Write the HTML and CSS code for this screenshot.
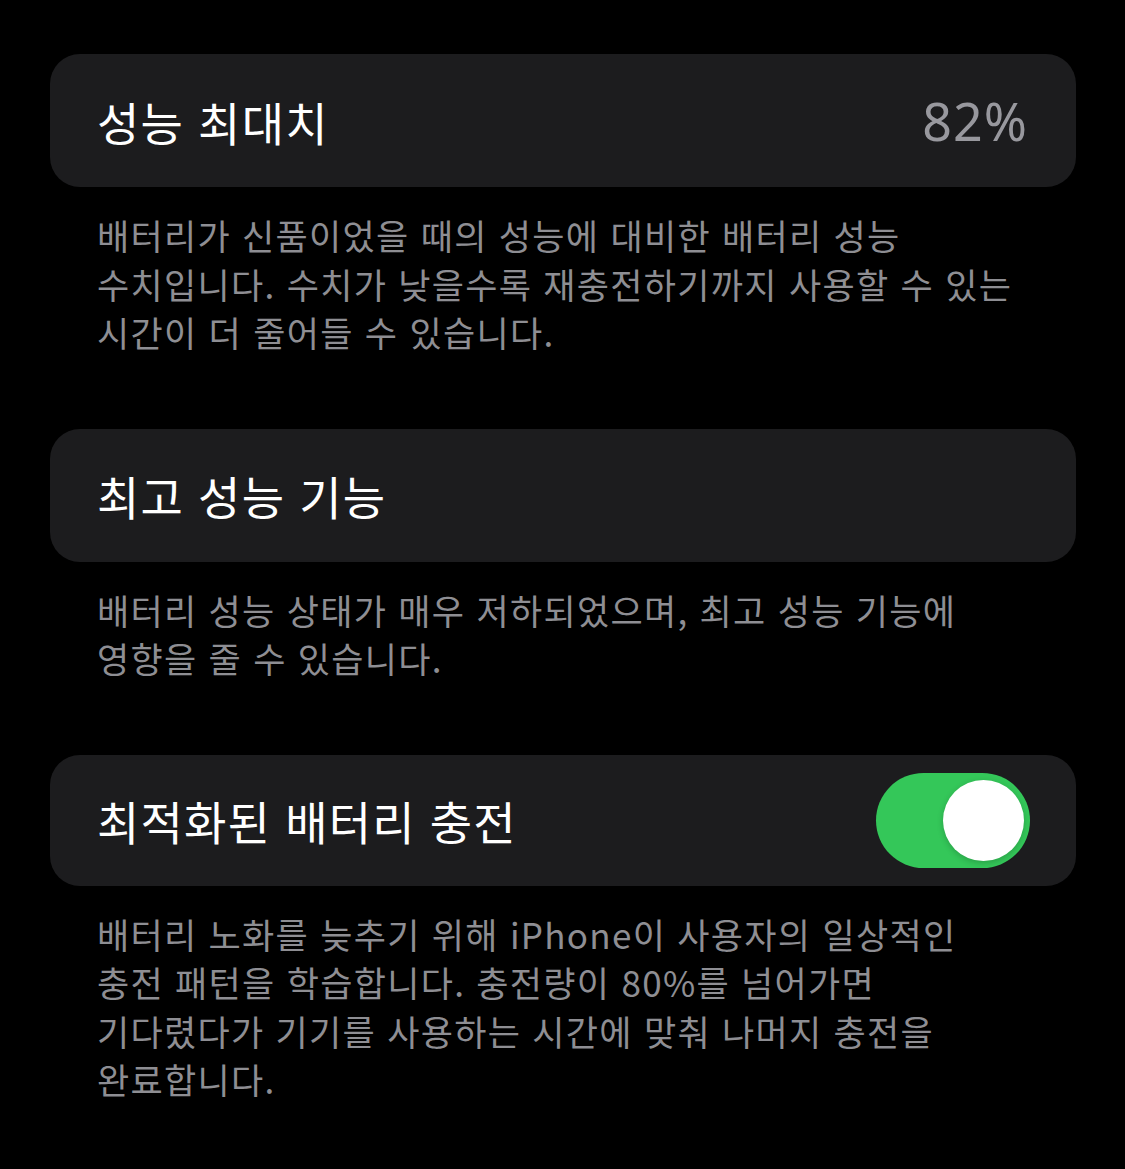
FILE: index.html
```html
<!DOCTYPE html>
<html lang="ko">
<head>
<meta charset="utf-8">
<link rel="stylesheet" href="styles.css">
</head>
<body>
<div class="page">
  <section class="group">
    <div class="card">
      <span class="title">성능 최대치</span>
      <span class="value">82%</span>
    </div>
    <p class="desc">배터리가 신품이었을 때의 성능에 대비한 배터리 성능<br>수치입니다. 수치가 낮을수록 재충전하기까지 사용할 수 있는<br>시간이 더 줄어들 수 있습니다.</p>
  </section>
  <section class="group">
    <div class="card">
      <span class="title">최고 성능 기능</span>
    </div>
    <p class="desc">배터리 성능 상태가 매우 저하되었으며, 최고 성능 기능에<br>영향을 줄 수 있습니다.</p>
  </section>
  <section class="group">
    <div class="card card-toggle">
      <span class="title">최적화된 배터리 충전</span>
      <span class="switch on"><span class="knob"></span></span>
    </div>
    <p class="desc">배터리 노화를 늦추기 위해 iPhone이 사용자의 일상적인<br>충전 패턴을 학습합니다. 충전량이 80%를 넘어가면<br>기다렸다가 기기를 사용하는 시간에 맞춰 나머지 충전을<br>완료합니다.</p>
  </section>
</div>
</body>
</html>
```

FILE: styles.css
```css
html, body {
  margin: 0;
  padding: 0;
  background: #000;
}
body {
  font-family: "Noto Sans CJK KR", "Noto Sans", sans-serif;
  color: #fff;
}
.page {
  padding: 54px 49px 0 50px;
  display: flex;
  flex-direction: column;
}
.group {
  display: flex;
  flex-direction: column;
  margin-bottom: 72px;
}
.card {
  height: 133px;
  background: #1c1c1e;
  border-radius: 30px;
  display: flex;
  align-items: center;
  justify-content: space-between;
  padding: 0 48px 0 47px;
}
.card-toggle {
  padding-right: 46px;
  height: 131px;
}
.title {
  font-size: 46px;
  line-height: 1;
  letter-spacing: 1.2px;
  color: #fff;
}
.value {
  font-size: 52px;
  line-height: 1;
  letter-spacing: 1px;
  color: #98989e;
  font-family: "Noto Sans", "Noto Sans CJK KR", sans-serif;
}
.switch {
  width: 154px;
  height: 95px;
  border-radius: 48px;
  background: #34c759;
  position: relative;
  display: block;
}
.knob {
  position: absolute;
  right: 6px;
  top: 7px;
  width: 81px;
  height: 81px;
  border-radius: 50%;
  background: #fff;
  box-shadow: 0 2px 6px rgba(0,0,0,0.2);
}
.desc {
  margin: 24px 0 0 0;
  padding-left: 47px;
  font-size: 35px;
  line-height: 48.5px;
  color: #8e8e93;
  white-space: nowrap;
  letter-spacing: 1.3px;
}
```
